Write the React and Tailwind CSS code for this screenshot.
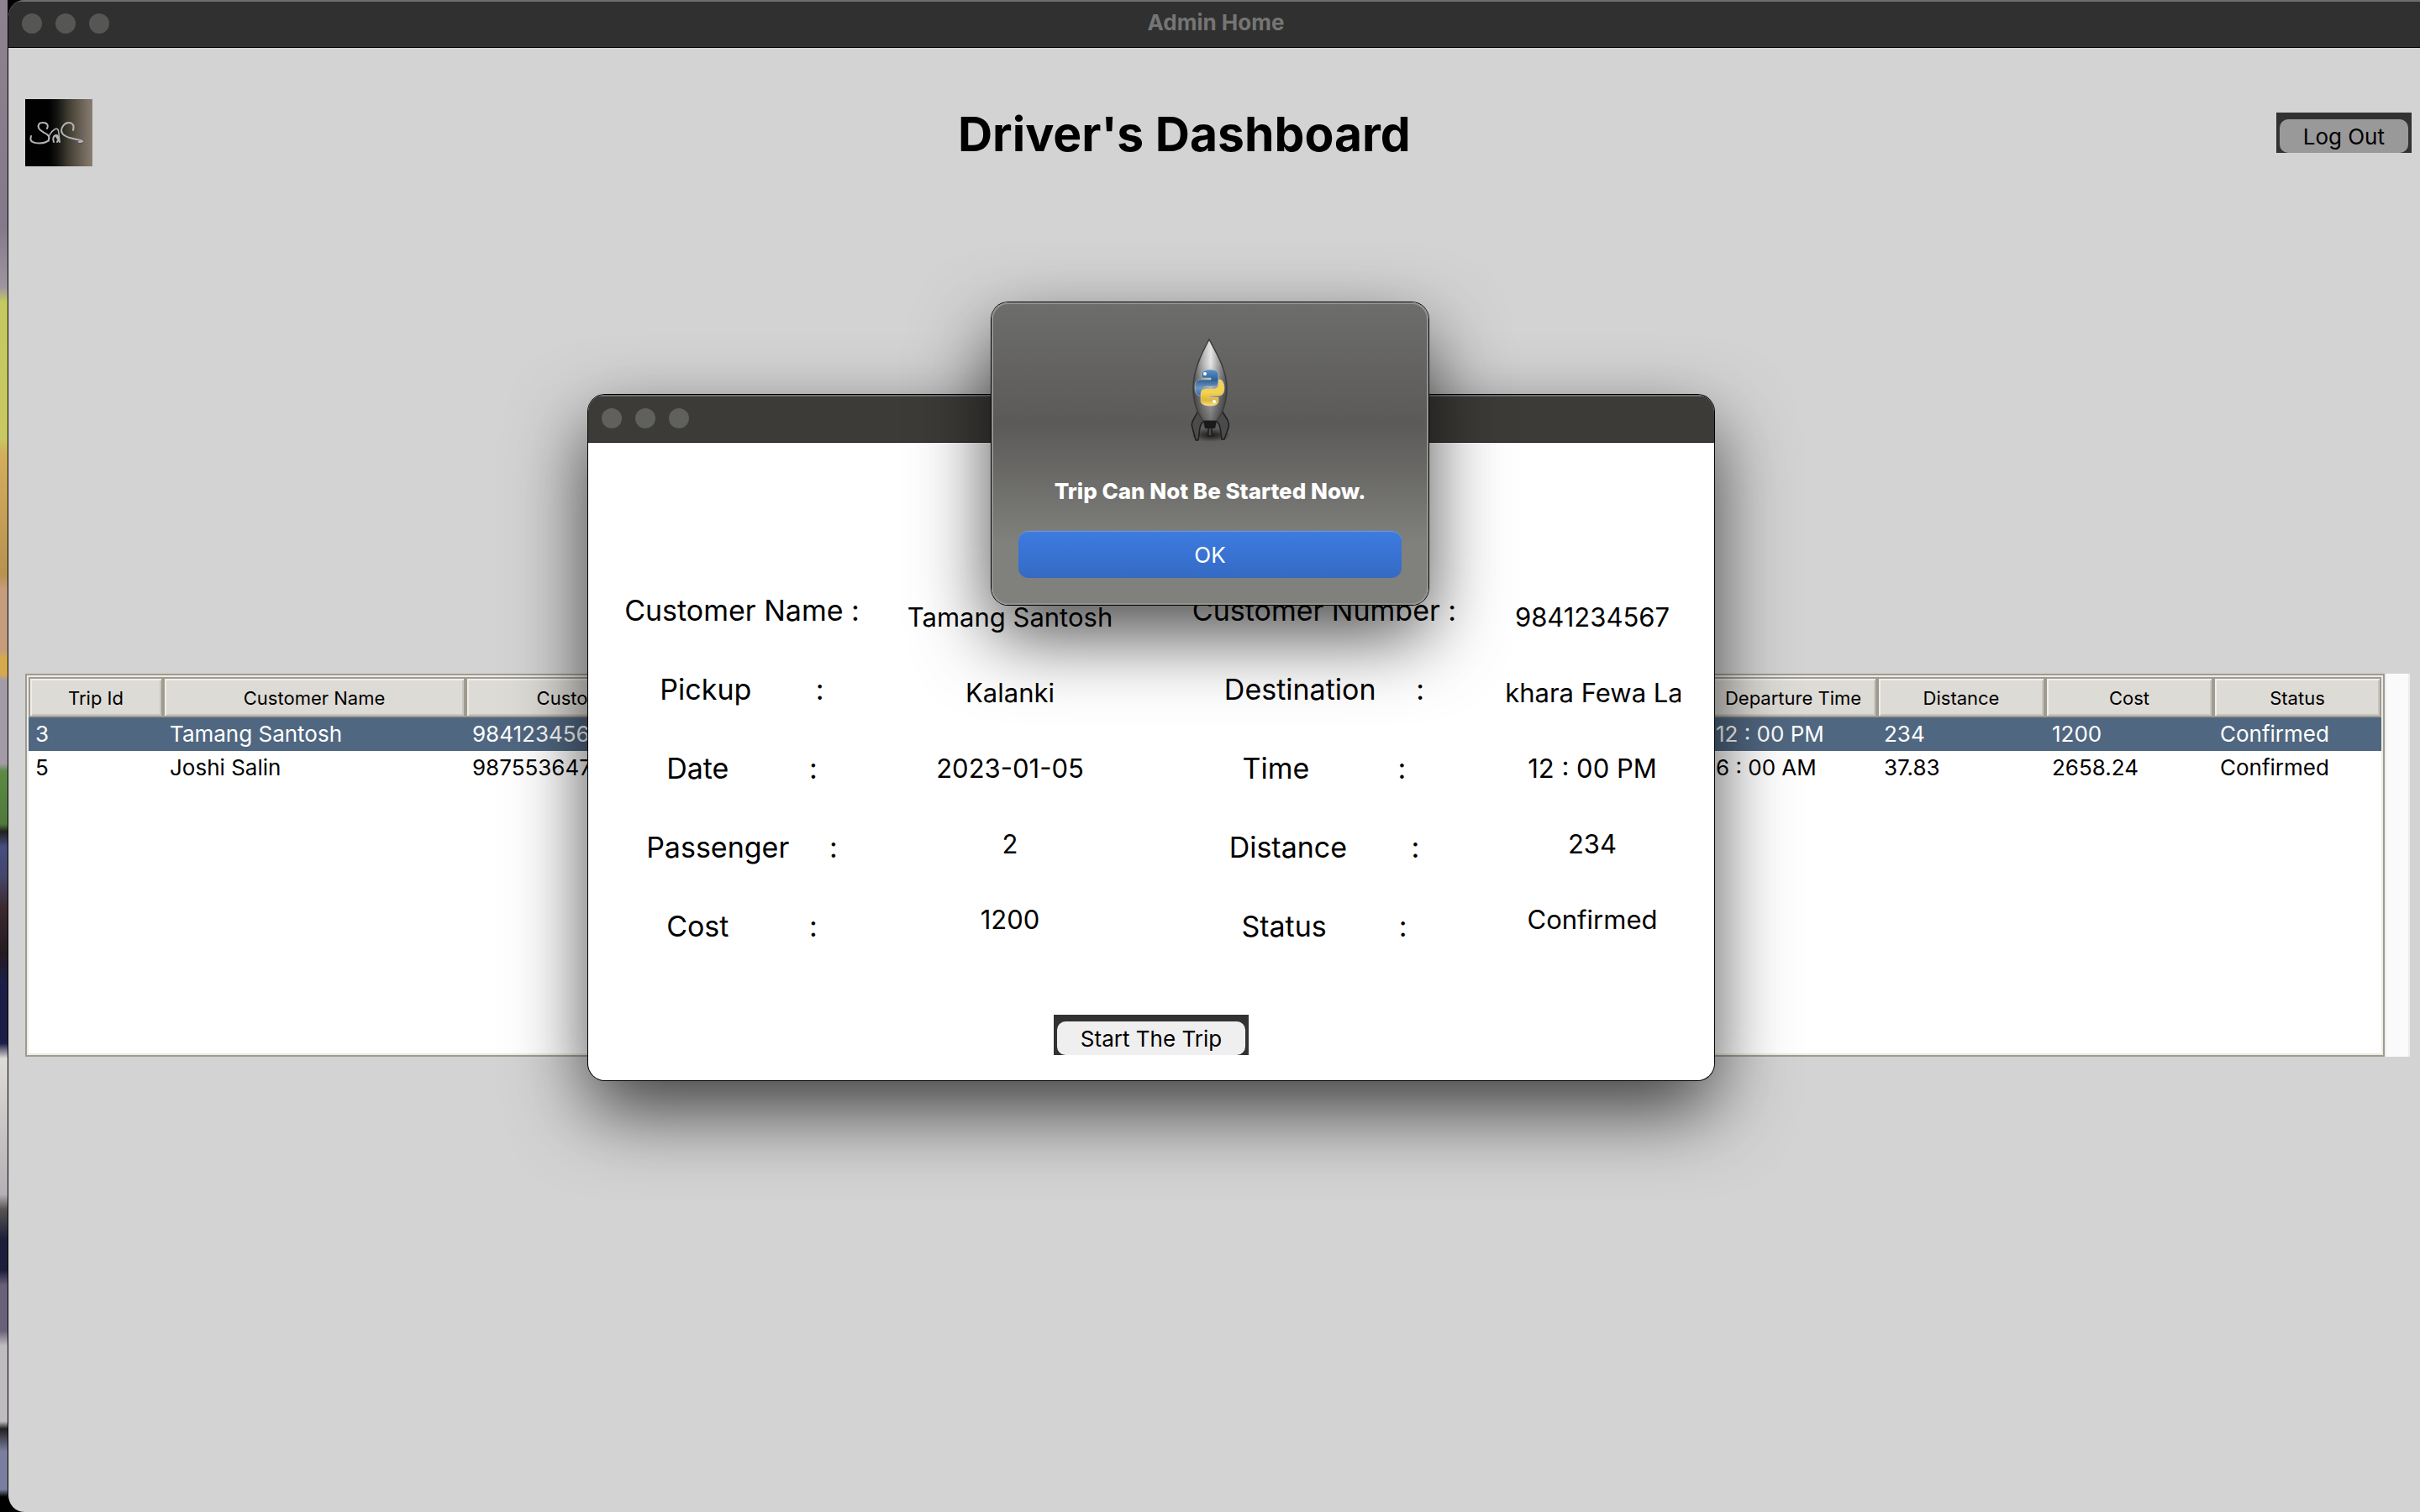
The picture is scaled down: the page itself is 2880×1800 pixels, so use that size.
const tripColumns = [
  { label: "Trip Id", col: "w-[160px]" },
  { label: "Customer Name", col: "w-[360px]" },
  { label: "Customer Number", col: "w-[360px]" },
  { label: "", col: "w-[1120px]" },
  { label: "Departure Time", col: "w-[200px]" },
  { label: "Distance", col: "w-[200px]" },
  { label: "Cost", col: "w-[200px]" },
  { label: "Status", col: "w-[200px]" },
];

const trips = [
  { selected: true, cells: ["3", "Tamang Santosh", "9841234567", "", "12 : 00 PM", "234", "1200", "Confirmed"] },
  { selected: false, cells: ["5", "Joshi Salin", "9875536475", "", "6 : 00 AM", "37.83", "2658.24", "Confirmed"] },
];

const leftLabels = ["Customer Name :", "Pickup        :", "Date          :", "Passenger     :", "Cost          :"];
const leftValues = ["Tamang Santosh", "Kalanki", "2023-01-05", "2", "1200"];
const rightLabels = ["Customer Number :", "Destination     :", "Time           :", "Distance        :", "Status         :"];
const rightValues = ["9841234567", "Pokhara Fewa Lake", "12 : 00 PM", "234", "Confirmed"];

function TitleBar({ title, className, dot }) {
  return (
    <div className={`relative flex h-[57px] items-center gap-4 border-t-2 border-b border-t-[#6e6e6e] border-b-black px-4 pb-0.5 ${className}`}>
      <span className={`size-6 rounded-full ${dot}`} />
      <span className={`size-6 rounded-full ${dot}`} />
      <span className={`size-6 rounded-full ${dot}`} />
      {title && (
        <h1 className="absolute inset-x-0 pb-0.5 pl-1 text-center text-[26px] leading-8 font-bold text-[#757575]">{title}</h1>
      )}
    </div>
  );
}

function TkButton({ children, face }) {
  return (
    <button type="button" className="h-12 bg-[#323232] px-1 pt-2 text-[26px] text-black">
      <span className={`flex h-10 items-center justify-center rounded-[10px] px-7 ${face}`}>{children}</span>
    </button>
  );
}

function Logo() {
  return (
    <svg className="size-20" viewBox="0 0 80 80" role="img" aria-label="SaC logo">
      <defs>
        <linearGradient id="logo-bg" x1="0" x2="1" y1="0" y2="0">
          <stop offset="0" stopColor="#000" />
          <stop offset="0.36" stopColor="#020202" />
          <stop offset="0.48" stopColor="#151513" />
          <stop offset="0.64" stopColor="#403c31" />
          <stop offset="0.82" stopColor="#675e53" />
          <stop offset="1" stopColor="#897d71" />
        </linearGradient>
      </defs>
      <rect width="80" height="80" fill="url(#logo-bg)" />
      <g fill="none" stroke="#b4b4b4" strokeWidth="2" strokeLinecap="round" strokeLinejoin="round">
        <path d="M26 35c2-4 0-7-5-7s-6 3-5 6c1 4 6 5 10 8s3 7-1 9c-4 2-13 2-16 0-3-1-3-4-2-7" />
        <path d="M28 50c-1-5 2-11 7-14 3-2 5 0 5 5l1 9" strokeWidth="1.5" />
        <path d="M34 51c-2-4 0-8 3-8s3 5 1 8M36 43l5 8" />
        <path d="M57 37c2-6-1-9-5-9-5 0-9 5-9 10 1 5 8 8 14 9 5 1 11 2 11 3s-2 1-4 1" />
      </g>
      <path d="M59 53h9" stroke="#55545a" strokeWidth="2" />
    </svg>
  );
}

function Rocket() {
  return (
    <svg className="h-[124px] w-12" viewBox="-1 0 48 124" aria-hidden="true">
      <defs>
        <linearGradient id="hull" x1="0" x2="1" y1="0" y2="0">
          <stop offset="0" stopColor="#5c5c5c" />
          <stop offset="0.3" stopColor="#b4b4b4" />
          <stop offset="0.52" stopColor="#e6e6e6" />
          <stop offset="0.7" stopColor="#b0b0b0" />
          <stop offset="1" stopColor="#5c5c5c" />
        </linearGradient>
        <linearGradient id="hull-shade" x1="0" x2="0" y1="0" y2="1">
          <stop offset="0.3" stopColor="#000" stopOpacity="0" />
          <stop offset="1" stopColor="#000" stopOpacity="0.5" />
        </linearGradient>
        <linearGradient id="py-blue" x1="0" x2="0" y1="0" y2="1">
          <stop offset="0" stopColor="#5b93cb" />
          <stop offset="0.4" stopColor="#2f6196" />
          <stop offset="0.7" stopColor="#6f95c0" />
          <stop offset="1" stopColor="#376ca6" />
        </linearGradient>
        <linearGradient id="py-yellow" x1="0" x2="0" y1="0" y2="1">
          <stop offset="0" stopColor="#f0d35e" />
          <stop offset="0.5" stopColor="#f4d24a" />
          <stop offset="0.8" stopColor="#dfb53a" />
          <stop offset="1" stopColor="#f8e57c" />
        </linearGradient>
        <radialGradient id="ground">
          <stop offset="0" stopColor="#000" stopOpacity="0.75" />
          <stop offset="1" stopColor="#000" stopOpacity="0" />
        </radialGradient>
      </defs>
      <ellipse cx="24" cy="116" rx="24" ry="8" fill="url(#ground)" />
      <g fill="#4b4b4b" stroke="#1d1d1d" strokeWidth="1.5" strokeLinejoin="round">
        <path d="M9 87 3 98c-2 3-2 6-1 9l4 15h3l2-15c1-5 4-8 8-9z" />
        <path d="m37 87 7 11c1 3 2 6 1 9l-5 14h-3l-2-14c-1-5-3-8-7-9z" />
        <path d="M21 107h4v10h-4z" />
      </g>
      <path d="M22 2C14 17 3 38 3 60c0 16 5 30 12 39h16c7-9 12-23 12-39C43 38 30 17 22 2z" fill="url(#hull)" />
      <path d="M22 2C14 17 3 38 3 60c0 16 5 30 12 39h16c7-9 12-23 12-39C43 38 30 17 22 2z" fill="url(#hull-shade)" stroke="#3c3c3c" strokeWidth="1.5" />
      <path d="M15 99h16l-2 9H17z" fill="#1a1a1a" />
      <g transform="translate(5 38)" stroke="#d0cfc6" strokeOpacity="0.55" strokeWidth="1">
        <path d="M18 0c-7 0-10 2-10 6v4h11v2H6c-4 0-6 4-6 9s2 10 5 10h3v-5c0-4 3-6 7-6h8c4 0 5-3 5-6V6c0-4-3-6-10-6z" fill="url(#py-blue)" />
        <path d="M18 43c7 0 10-2 10-6v-4H17v-2h12c4 0 6-4 6-9s-2-10-5-10h-2v5c0 4-3 6-6 6h-9c-4 0-6 3-6 6v8c0 4 4 6 11 6z" fill="url(#py-yellow)" />
        <circle cx="12" cy="5" r="2" fill="#fff" stroke="none" />
        <circle cx="23" cy="38" r="2" fill="#fff" stroke="none" />
      </g>
    </svg>
  );
}

function TripTable() {
  return (
    <div className="flex h-[456px]">
      <div className="min-w-0 flex-1 border-2 border-[#9f9b8f] bg-white">
        <div className="h-full border-2 border-[#ecebe6]">
          <table className="w-full table-fixed border-collapse">
            <colgroup>
              {tripColumns.map((c, i) => (
                <col key={i} className={c.col} />
              ))}
            </colgroup>
            <thead>
              <tr>
                {tripColumns.map((c, i) => (
                  <th key={i} scope="col" className="h-12 p-0 font-normal">
                    <div className="flex h-12 items-center justify-center border-2 border-[#9f9b8f] bg-[#dddbd6] pt-0.5 text-[22px] whitespace-nowrap text-black shadow-[inset_2px_2px_0_#efeeea,inset_-2px_-2px_0_#c9c6be]">
                      {c.label}
                    </div>
                  </th>
                ))}
              </tr>
            </thead>
            <tbody>
              {trips.map((t) => (
                <tr key={t.cells[0]} className={t.selected ? "bg-[#506781] text-white" : "text-black"}>
                  {t.cells.map((v, i) => (
                    <td key={i} className="h-10 px-2 py-0 text-[26px] leading-10 whitespace-nowrap">{v}</td>
                  ))}
                </tr>
              ))}
            </tbody>
          </table>
        </div>
      </div>
      <div className="w-[30px] border-x-2 border-[#ededed] bg-[#fafafa]" />
    </div>
  );
}

function LabelColumn({ items, className }) {
  return (
    <div className={`flex min-w-0 flex-col items-center ${className}`}>
      {items.map((t) => (
        <span key={t} className="h-[94px] text-[34px] leading-[44px] whitespace-pre">{t}</span>
      ))}
    </div>
  );
}

function ValueColumn({ items }) {
  return (
    <div className="flex min-w-0 flex-col pt-2.5">
      {items.map((t) => (
        <span key={t} className="flex h-[90px] justify-center overflow-hidden text-[31px] leading-10 whitespace-nowrap">{t}</span>
      ))}
    </div>
  );
}

function TripWindow() {
  return (
    <section
      aria-label="Trip details"
      className="absolute top-[470px] left-[700px] w-[1340px] overflow-hidden rounded-[20px] bg-white text-black shadow-[0_0_0_1px_#000,0_36px_90px_rgba(0,0,0,0.7)]"
    >
      <TitleBar className="bg-[#3d3b38]" dot="bg-[#60605e]" />
      <div className="flex flex-col items-center pt-[178px] pb-[30px]">
        <div className="grid w-full grid-cols-[366fr_272fr_452fr_210fr_40fr]">
          <LabelColumn items={leftLabels} className="" />
          <ValueColumn items={leftValues} />
          <LabelColumn items={rightLabels} className="pl-6" />
          <ValueColumn items={rightValues} />
        </div>
        <div className="mt-[33px]">
          <TkButton face="bg-[#efeff0]">Start The Trip</TkButton>
        </div>
      </div>
    </section>
  );
}

function AlertDialog() {
  return (
    <div
      role="alertdialog"
      aria-labelledby="alert-message"
      className="absolute top-[360px] left-[1180px] flex w-[520px] flex-col items-center rounded-[20px] border-2 border-[#92928f] bg-linear-to-b from-[#6d6d6b] via-[#5b5a58] via-40% to-[#80807d] to-80% px-[30px] pt-10 pb-[30px] shadow-[0_0_0_1px_#000,0_36px_90px_rgba(0,0,0,0.7)]"
    >
      <Rocket />
      <p id="alert-message" className="mt-[43px] text-[26px] leading-8 font-extrabold whitespace-nowrap text-white">
        Trip Can Not Be Started Now.
      </p>
      <button
        type="button"
        className="mt-[31px] h-14 w-full rounded-xl border-t border-[#6a9be8] bg-linear-to-b from-[#3d7be0] to-[#346ac4] text-[26px] text-white"
      >
        OK
      </button>
    </div>
  );
}

export default function App() {
  return (
    <div className="relative flex min-h-screen overflow-hidden bg-black font-[Inter,sans-serif]">
      <div className="w-[9px] bg-[linear-gradient(#8f8290_0,#84798a_15%,#9f95a0_19%,#c5c95f_20%,#c9c862_29%,#d4ae5c_30%,#b8924f_38%,#c59d7d_39%,#c59d7d_43%,#d6a94e_43.5%,#d6a94e_44.6%,#a49ba8_45%,#a49ba8_50.5%,#5d8a45_51%,#4f7a3c_54.5%,#22201f_55%,#454e80_56%,#45456a_58%,#3c2a30_60%,#241a20_63%,#1c1e48_65%,#1c1e48_69%,#dddbd6_70%,#b5b0b5_79%,#55534f_80%,#1b1d3b_82%,#1b1d3b_84%,#69607b_85%,#69607b_88%,#bfbcbf_89%,#bfbcbf_94%,#222_94.5%,#7a7fa0_96%,#7a7fa0_98.5%,#000_99%)]" />
      <main className="min-w-0 flex-1 overflow-hidden rounded-l-[20px] border-l border-black bg-[#d3d3d3]">
        <TitleBar title="Admin Home" className="bg-[#303030]" dot="bg-[#565655]" />
        <div className="flex flex-col pt-[61px] pr-2.5 pl-5">
          <header className="flex items-center justify-between">
            <Logo />
            <h2 className="pt-1 text-[57px] leading-[72px] font-bold text-black">Driver's Dashboard</h2>
            <TkButton face="bg-[#999999]">Log Out</TkButton>
          </header>
          <div className="mt-[604px] pr-0.5">
            <TripTable />
          </div>
        </div>
      </main>
      <TripWindow />
      <AlertDialog />
    </div>
  );
}
